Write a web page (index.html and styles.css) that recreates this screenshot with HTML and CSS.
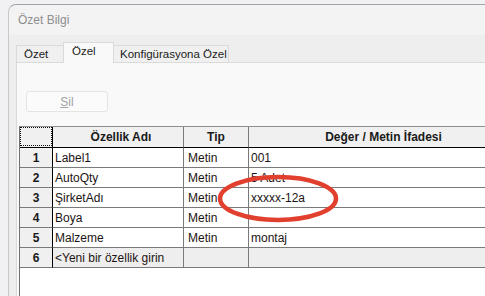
FILE: index.html
```html
<!DOCTYPE html>
<html lang="tr">
<head>
<meta charset="utf-8">
<title>Özet Bilgi</title>
<link rel="stylesheet" href="styles.css">
</head>
<body>
<div class="window">
  <div class="titlebar">Özet Bilgi</div>
  <div class="frame">
    <div class="tabs">
      <div class="tab tab-first">Özet</div>
      <div class="tab tab-active">Özel</div>
      <div class="tab tab-wide">Konfigürasyona Özel</div>
    </div>
    <div class="panel">
      <button class="btn" disabled><u>S</u>il</button>
      <div class="grid">
        <div class="cell head corner"><div class="focus"></div></div>
        <div class="cell head name-head">Özellik Adı</div>
        <div class="cell head">Tip</div>
        <div class="cell head">Değer / Metin İfadesi</div>

        <div class="cell num">1</div>
        <div class="cell txt">Label1</div>
        <div class="cell txt tip">Metin</div>
        <div class="cell txt">001</div>

        <div class="cell num">2</div>
        <div class="cell txt">AutoQty</div>
        <div class="cell txt tip">Metin</div>
        <div class="cell txt">5 Adet</div>

        <div class="cell num">3</div>
        <div class="cell txt">ŞirketAdı</div>
        <div class="cell txt tip">Metin</div>
        <div class="cell txt">xxxxx-12a</div>

        <div class="cell num">4</div>
        <div class="cell txt">Boya</div>
        <div class="cell txt tip">Metin</div>
        <div class="cell txt"></div>

        <div class="cell num">5</div>
        <div class="cell txt">Malzeme</div>
        <div class="cell txt tip">Metin</div>
        <div class="cell txt">montaj</div>

        <div class="cell num">6</div>
        <div class="cell txt new">&lt;Yeni bir özellik girin</div>
        <div class="cell txt new tip"></div>
        <div class="cell txt new"></div>
      </div>
    </div>
  </div>
</div>
<svg class="annot" width="485" height="296" viewBox="0 0 485 296">
  <ellipse cx="278" cy="198.5" rx="58" ry="21.5" fill="none" stroke="#e1402f" stroke-width="4.5"/>
</svg>
</body>
</html>
```

FILE: styles.css
```css
html, body {
  margin: 0;
  padding: 0;
}
body {
  width: 485px;
  height: 296px;
  overflow: hidden;
  background: #f1f1f4;
  font-family: "Liberation Sans", Arial, sans-serif;
  position: relative;
}
.window {
  margin: 4px 0 0 8px;
  height: 292px;
  box-sizing: border-box;
  border-top: 1px solid #a4a4a6;
  border-left: 1px solid #c9c9cb;
  border-top-left-radius: 8px;
  background: #f3f3f3;
  overflow: hidden;
  display: flex;
  flex-direction: column;
}
.titlebar {
  height: 30px;
  line-height: 30px;
  padding-left: 9px;
  font-size: 12px;
  color: #8e8e8e;
  flex: none;
}
.frame {
  flex: 1;
  background: #eeeeee;
  padding-left: 7px;
  display: flex;
  flex-direction: column;
}
.tabs {
  height: 27px;
  display: flex;
  align-items: flex-end;
  flex: none;
  position: relative;
  z-index: 1;
}
.tab {
  box-sizing: border-box;
  height: 17px;
  line-height: 16px;
  font-size: 11.5px;
  color: #1b1b1b;
  background: #f0f0f0;
  border: 1px solid #dadada;
  border-bottom: none;
  padding-left: 6px;
  white-space: nowrap;
}
.tab-first {
  width: 47px;
  padding-left: 7px;
  border-right: none;
}
.tab-active {
  width: 51px;
  height: 21px;
  margin-bottom: -1px;
  padding-left: 8px;
  line-height: 17px;
  background: #f9f9f9;
}
.tab-wide {
  width: 115px;
  border-left: none;
}
.panel {
  flex: 1;
  background: #f9f9f9;
  border-top: 1px solid #dadada;
  border-left: 1px solid #dadada;
  display: flex;
  flex-direction: column;
  align-items: flex-start;
}
.btn {
  margin: 28px 0 0 9px;
  width: 82px;
  height: 21px;
  box-sizing: border-box;
  border: 1px solid #e4e4e4;
  border-radius: 3px;
  background: #fbfbfb;
  color: #a2a2a2;
  font-family: "Liberation Sans", Arial, sans-serif;
  font-size: 12px;
  padding: 0;
}
.grid {
  margin: 14px 0 0 2px;
  flex: 1;
  width: 520px;
  box-sizing: border-box;
  background: #ffffff;
  border-top: 1px solid #8e8e8e;
  border-left: 1px solid #707070;
  display: grid;
  grid-template-columns: 33px 131px 65px 270px;
  grid-auto-rows: 20px;
  grid-template-rows: 21px;
  align-content: start;
}
.cell {
  box-sizing: border-box;
  border-right: 1px solid #7a7a7a;
  border-bottom: 1px solid #7a7a7a;
  display: flex;
  align-items: center;
  white-space: nowrap;
  overflow: hidden;
  font-size: 12px;
  color: #1c1414;
}
.head {
  background: #f0f0f0;
  border-bottom-color: #000;
  justify-content: center;
  font-weight: bold;
  color: #1a1a1a;
}
.name-head {
  padding-left: 6px;
}
.corner {
  border-right-color: #000;
  align-items: stretch;
  justify-content: stretch;
}
.focus {
  flex: 1;
  border: 1px dotted #111;
  margin-bottom: 1px;
}
.num {
  background: #f0f0f0;
  border-right-color: #000;
  justify-content: center;
  font-weight: bold;
  color: #1a1a1a;
}
.txt {
  padding-left: 2px;
}
.tip {
  padding-left: 4px;
}
.new {
  background: #eeeeee;
}
.annot {
  position: absolute;
  left: 0;
  top: 0;
  pointer-events: none;
}
```
